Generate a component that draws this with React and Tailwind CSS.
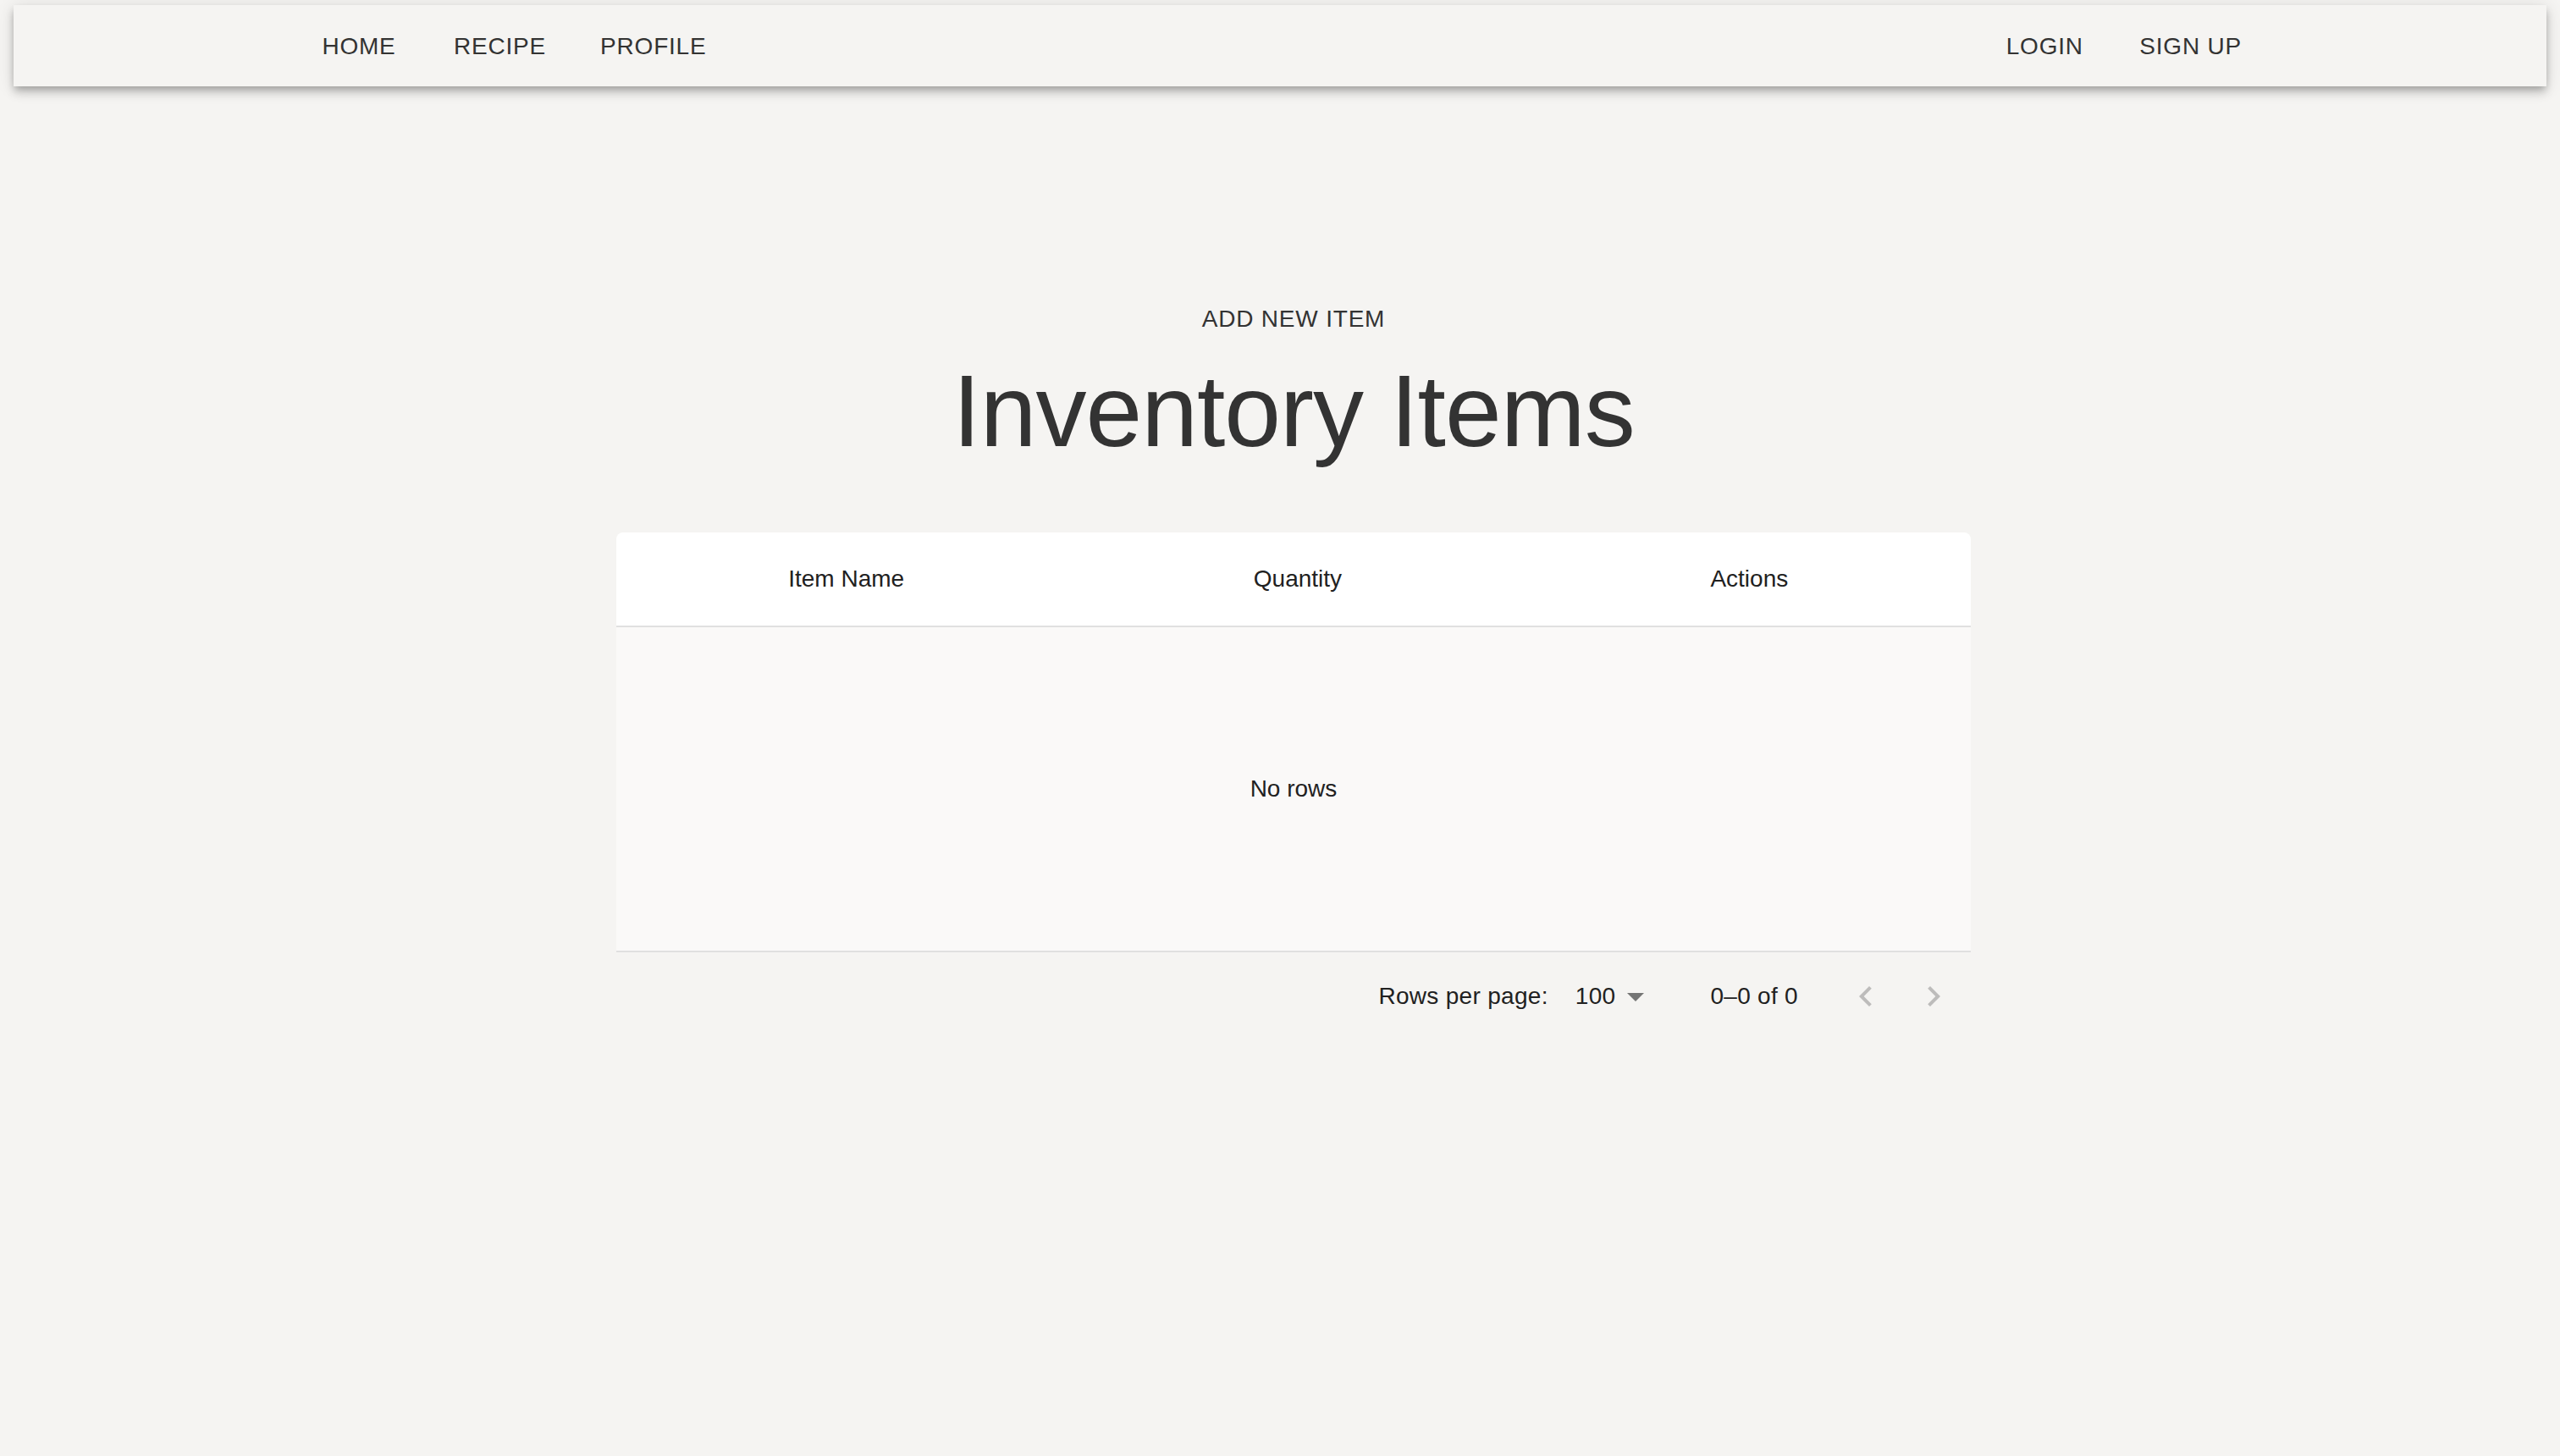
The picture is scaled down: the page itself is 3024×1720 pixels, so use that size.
import React from 'react';

const navLeft = ['Home', 'Recipe', 'Profile'];
const navRight = ['Login', 'Sign Up'];

function NavButton({ label }) {
  return (
    <button className="min-w-[128px] px-4 py-3 text-[28px] leading-[49px] uppercase tracking-[0.8px] text-[#333333] text-center">
      {label}
    </button>
  );
}

function ChevronLeft() {
  return (
    <svg viewBox="0 0 24 24" className="w-12 h-12 fill-[#bdbcbb]">
      <path d="M15.41 16.59 10.83 12l4.58-4.59L14 6l-6 6 6 6 1.41-1.41z" />
    </svg>
  );
}

function ChevronRight() {
  return (
    <svg viewBox="0 0 24 24" className="w-12 h-12 fill-[#bdbcbb]">
      <path d="M8.59 16.59 13.17 12 8.59 7.41 10 6l6 6-6 6-1.41-1.41z" />
    </svg>
  );
}

export default function App() {
  return (
    <div className="min-h-screen bg-[#f5f4f2] font-['Liberation_Sans',Arial,sans-serif] pt-[6px]">
      {/* Top navigation */}
      <nav className="mx-4 h-[96px] bg-[#f5f4f2] shadow-[0_4px_8px_-2px_rgba(0,0,0,0.2),0_8px_10px_0_rgba(0,0,0,0.14),0_2px_20px_0_rgba(0,0,0,0.12)]">
        <div className="max-w-[2400px] mx-auto h-full px-12 flex items-center justify-between">
          <div className="flex items-center gap-8">
            {navLeft.map(l => <NavButton key={l} label={l} />)}
          </div>
          <div className="flex items-center gap-8">
            {navRight.map(l => <NavButton key={l} label={l} />)}
          </div>
        </div>
      </nav>

      <main className="flex flex-col items-center pt-[238px] pl-[32px]">
        <button className="px-4 py-3 text-[28px] leading-[49px] uppercase tracking-[0.8px] text-[#333333]">
          Add New Item
        </button>
        <h2 className="text-[120px] leading-[144px] font-light tracking-[-1px] text-[#333333]">
          Inventory Items
        </h2>

        {/* Data grid */}
        <div className="w-[1600px] mt-[72px]">
          <div className="h-[112px] bg-white rounded-t-[8px] border-b-2 border-[#e0e0e0] grid grid-cols-3 items-center text-[28px] text-[#212121]">
            <div className="pl-[10px] text-center">Item Name</div>
            <div className="pl-[10px] text-center">Quantity</div>
            <div className="pl-[10px] text-center">Actions</div>
          </div>
          <div className="h-[384px] bg-[#faf9f8] border-b-2 border-[#e0e0e0] flex items-center justify-center text-[28px] text-[#212121]">
            No rows
          </div>

          {/* Pagination */}
          <div className="h-[104px] flex items-center justify-end pr-[4px] text-[28px] text-[#212121] tracking-[0.3px]">
            <span>Rows per page:</span>
            <div className="ml-4 pl-4 flex items-center">
              <span>100</span>
              <svg viewBox="0 0 24 24" className="w-12 h-12 fill-[#757575]">
                <path d="M7 10l5 5 5-5z" />
              </svg>
            </div>
            <span className="ml-16">0–0 of 0</span>
            <div className="ml-10 flex items-center">
              <button className="p-4" disabled><ChevronLeft /></button>
              <button className="p-4" disabled><ChevronRight /></button>
            </div>
          </div>
        </div>
      </main>
    </div>
  );
}
